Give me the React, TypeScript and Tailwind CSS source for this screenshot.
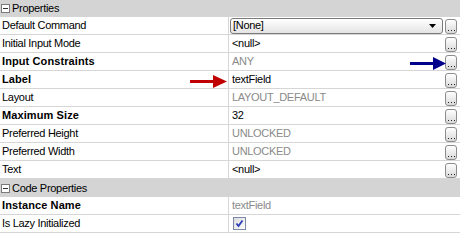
import React from "react";

const font = { fontFamily: '"Liberation Sans", Arial, sans-serif' };

function MinusBox() {
  return (
    <svg width="9" height="9" viewBox="0 0 9 9" className="mx-[1px] shrink-0">
      <rect x="0.5" y="0.5" width="8" height="8" fill="#ffffff" stroke="#7a7a7a" />
      <rect x="2" y="4" width="5" height="1" fill="#333333" />
    </svg>
  );
}

function DotsButton() {
  return (
    <div className="ml-auto mr-[3px] mt-[1px] h-[15px] w-[12px] shrink-0 rounded-[3px] border border-[#8c8c8c] bg-gradient-to-b from-[#ffffff] to-[#d9d9d9] flex items-end justify-center pb-[2px] gap-[1px]">
      <div className="w-[1px] h-[1px] bg-[#222]" />
      <div className="w-[1px] h-[1px] bg-[#222] ml-[1px]" />
      <div className="w-[1px] h-[1px] bg-[#222] ml-[1px]" />
    </div>
  );
}

function Header({ label, h }: { label: string; h: string }) {
  return (
    <div className={`flex items-center bg-[#d4d4d4] ${h}`}>
      <MinusBox />
      <span className="ml-[1px] text-[11px] text-black tracking-[-0.3px]">{label}</span>
    </div>
  );
}

type RowProps = {
  label: string;
  bold?: boolean;
  value?: React.ReactNode;
  grey?: boolean;
  button?: boolean;
};

function Row({ label, bold, value, grey, button }: RowProps) {
  return (
    <div className="flex h-[18px] border-b border-[#d6d6d6]">
      <div
        className={`w-[229px] shrink-0 border-r border-[#d6d6d6] pl-[2px] flex items-center text-[11px] ${
          bold ? "font-bold tracking-[0.1px]" : "tracking-[-0.3px]"
        } text-black`}
      >
        {label}
      </div>
      <div className="flex-1 flex items-center min-w-0">
        <span
          className={`pl-[3px] text-[11px] tracking-[-0.3px] ${grey ? "text-[#8a8a8a]" : "text-black"}`}
        >
          {value}
        </span>
        {button && <DotsButton />}
      </div>
    </div>
  );
}

function ComboRow() {
  return (
    <div className="flex h-[18px] border-b border-[#d6d6d6]">
      <div className="w-[229px] shrink-0 border-r border-[#d6d6d6] pl-[2px] flex items-center text-[11px] tracking-[-0.3px] text-black">
        Default Command
      </div>
      <div className="flex-1 flex items-center min-w-0">
        <div className="ml-[1px] h-[16px] w-[213px] rounded-[3px] border border-[#7a7a7a] bg-gradient-to-b from-[#ffffff] to-[#e4e4e4] flex items-center pl-[2px] pr-[6px] text-[11px] tracking-[-0.3px] text-black">
          <span>[None]</span>
          <svg width="7" height="4" viewBox="0 0 7 4" className="ml-auto">
            <polygon points="0,0 7,0 3.5,4" fill="#000" />
          </svg>
        </div>
        <DotsButton />
      </div>
    </div>
  );
}

function CheckRow() {
  return (
    <div className="flex h-[18px] border-b border-[#d6d6d6]">
      <div className="w-[229px] shrink-0 border-r border-[#d6d6d6] pl-[2px] flex items-center text-[11px] tracking-[-0.3px] text-black">
        Is Lazy Initialized
      </div>
      <div className="flex-1 flex items-center min-w-0 pl-[4px]">
        <div className="h-[13px] w-[13px] border border-[#7a8aa8] bg-gradient-to-br from-[#dcdcdc] to-[#ffffff] flex items-center justify-center">
          <svg width="9" height="9" viewBox="0 0 9 9">
            <path d="M1.5 4.5 L3.5 7 L7.5 1.5" stroke="#2c3fb8" strokeWidth="1.8" fill="none" />
          </svg>
        </div>
      </div>
    </div>
  );
}

export default function App() {
  return (
    <div className="relative w-[460px] h-[246px] bg-white overflow-hidden" style={font}>
      <Header label="Properties" h="h-[17px]" />
      <ComboRow />
      <Row label="Initial Input Mode" value="<null>" button />
      <Row label="Input Constraints" bold value="ANY" grey button />
      <Row label="Label" bold value="textField" button />
      <Row label="Layout" value="LAYOUT_DEFAULT" grey button />
      <Row label="Maximum Size" bold value="32" button />
      <Row label="Preferred Height" value="UNLOCKED" grey button />
      <Row label="Preferred Width" value="UNLOCKED" grey button />
      <Row label="Text" value="<null>" button />
      <Header label="Code Properties" h="h-[18px]" />
      <Row label="Instance Name" bold value="textField" grey />
      <CheckRow />

      <svg className="absolute left-[190px] top-[74px]" width="38" height="14" viewBox="0 0 38 14">
        <rect x="0" y="6" width="24" height="3" fill="#c00000" />
        <polygon points="23,1 37,7.5 23,14" fill="#c00000" />
      </svg>
      <svg className="absolute left-[410px] top-[57px]" width="36" height="13" viewBox="0 0 36 13">
        <rect x="0" y="5" width="24" height="3" fill="#00008b" />
        <polygon points="23,0 36,6.5 23,13" fill="#00008b" />
      </svg>
    </div>
  );
}
